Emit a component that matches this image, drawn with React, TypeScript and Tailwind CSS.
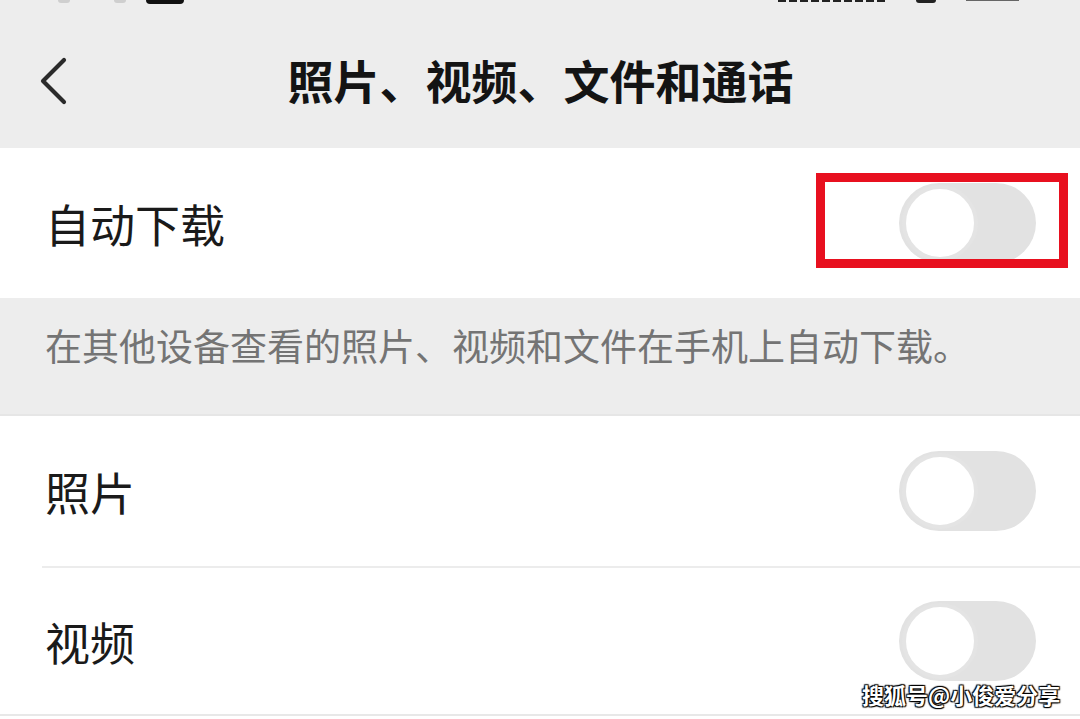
import React from "react";

const font = { fontFamily: '"Noto Sans CJK SC", "Noto Sans", sans-serif' };

function Toggle() {
  return (
    <div className="w-[137px] h-[80px] rounded-full bg-[#e2e2e2] flex items-center pl-[3px]">
      <div className="w-[76px] h-[76px] rounded-full bg-white border-[4px] border-[#e4e4e4]" />
    </div>
  );
}

export default function App() {
  return (
    <div className="w-[1080px] h-[719px] overflow-hidden bg-white relative" style={font}>
      {/* header */}
      <div className="h-[148px] bg-[#ededed] flex flex-col">
        <div className="h-[6px] flex items-start">
          <div className="ml-[58px] w-[12px] h-[3px] rounded-b-full bg-[#cfcfcf]" />
          <div className="ml-[44px] w-[12px] h-[3px] rounded-b-full bg-[#cfcfcf]" />
          <div className="ml-[20px] w-[38px] h-[4px] rounded-b-[4px] bg-[#111]" />
          <div className="ml-[594px] w-[110px] h-[2px] bg-[repeating-linear-gradient(90deg,#222_0_8px,transparent_8px_11px)]" />
          <div className="ml-[28px] w-[20px] h-[3px] rounded-b-[3px] bg-[#222]" />
          <div className="ml-[30px] w-[53px] h-[1px] bg-[#666]" />
        </div>
        <div className="flex-1 flex items-start relative">
          <svg className="ml-[38px] mt-[51px]" width="32" height="50" viewBox="0 0 32 50">
            <polyline points="26,3 5,24 26,45" fill="none" stroke="#2a2a2a" strokeWidth="4.2" strokeLinecap="round" strokeLinejoin="round" />
          </svg>
          <div className="absolute left-0 right-0 top-[44px] text-center text-[46px] leading-[58px] font-bold text-[#141414] pl-[1px]">
            照片、视频、文件和通话
          </div>
        </div>
      </div>

      {/* auto download row */}
      <div className="h-[150px] flex items-center justify-between pl-[45px] pr-[44px] relative">
        <span className="text-[45px] text-[#1a1a1a] leading-none">自动下载</span>
        <Toggle />
        <div className="absolute left-[816px] top-[25px] w-[252px] h-[95px] border-[9px] border-[#e8101f]" />
      </div>

      {/* description */}
      <div className="h-[118px] bg-[#ededed] border-b-[2px] border-[#e6e6e6] flex items-start pl-[45px] pt-[24px]">
        <span className="text-[37px] text-[#747474] leading-[46px]">
          在其他设备查看的照片、视频和文件在手机上自动下载。
        </span>
      </div>

      {/* photos */}
      <div className="h-[150px] flex items-center justify-between pl-[45px] pr-[44px]">
        <span className="text-[45px] text-[#1a1a1a] leading-none">照片</span>
        <Toggle />
      </div>
      <div className="ml-[42px] h-[2px] bg-[#ececec]" />

      {/* videos */}
      <div className="h-[148px] flex items-center justify-between pl-[45px] pr-[44px] border-b-[2px] border-[#e8e8e8]">
        <span className="text-[45px] text-[#1a1a1a] leading-none">视频</span>
        <Toggle />
      </div>

      {/* watermark */}
      <div
        className="absolute left-[862px] top-[680px] text-[22px] font-bold text-white leading-[28px]"
        style={{ textShadow: "1px 1px 1px #000, -1px -1px 1px #000, 1px -1px 1px #000, -1px 1px 1px #000" }}
      >
        搜狐号@小俊爱分享
      </div>
    </div>
  );
}
